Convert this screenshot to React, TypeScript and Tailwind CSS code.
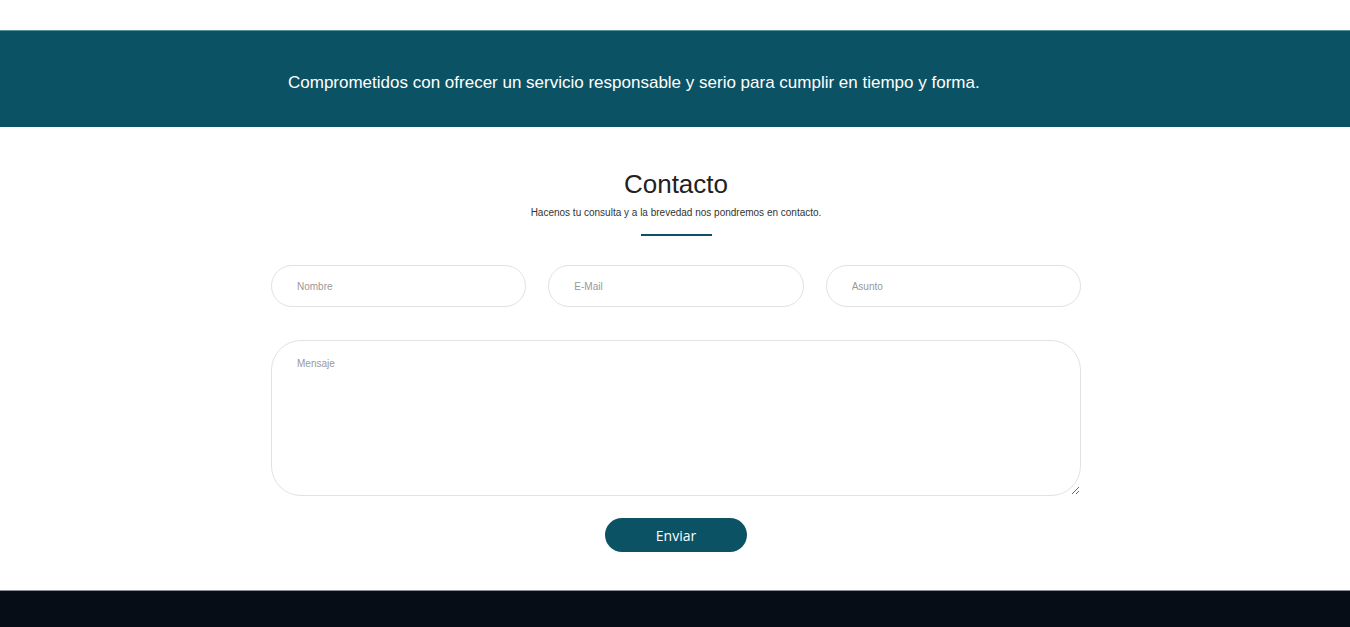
export default function App() {
  return (
    <div className="w-full min-h-[627px] bg-white" style={{ fontFamily: '"Liberation Sans", Arial, sans-serif' }}>
      <div className="h-[30px] bg-white" />
      <div className="h-[97px] bg-[#0b5264] border-t border-[#5a8f9c] flex items-center pl-[288px] pt-[6px]">
        <p className="text-white text-[17px] leading-none">
          Comprometidos con ofrecer un servicio responsable y serio para cumplir en tiempo y forma.
        </p>
      </div>
      <div className="flex flex-col items-center pt-[44px]">
        <h2 className="text-[26px] leading-none text-[#222] font-normal ml-[2px]">Contacto</h2>
        <p className="mt-[11px] text-[10px] leading-none text-[#333] ml-[2px]">
          Hacenos tu consulta y a la brevedad nos pondremos en contacto.
        </p>
        <div className="mt-[16px] w-[71px] h-[2px] bg-[#0b5264] ml-[2px]" />
        <form className="mt-[29px] w-[810px] ml-[2px] flex flex-col" onSubmit={(e) => e.preventDefault()}>
          <div className="grid grid-cols-3 gap-[22px]">
            {["Nombre", "E-Mail", "Asunto"].map((p) => (
              <input
                key={p}
                placeholder={p}
                className="h-[42px] rounded-full border border-[#e2e2e2] px-[25px] text-[10px] text-[#333] placeholder:text-[#999] outline-none"
                style={{ fontFamily: '"Liberation Sans", Arial, sans-serif' }}
              />
            ))}
          </div>
          <textarea
            placeholder="Mensaje"
            className="mt-[33px] h-[156px] rounded-[30px] border border-[#e2e2e2] px-[25px] pt-[15px] text-[10px] text-[#333] placeholder:text-[#999] outline-none"
            style={{ fontFamily: '"Liberation Sans", Arial, sans-serif' }}
          />
          <div className="flex justify-center mt-[22px]">
            <button
              type="submit"
              className="w-[142px] h-[34px] rounded-full bg-[#0b5264] text-white text-[14px] font-medium"
              style={{ fontFamily: '"Open Sans", sans-serif' }}
            >
              Enviar
            </button>
          </div>
        </form>
      </div>
      <div className="mt-[38px] h-[37px] bg-[#060d17] border-t border-[#8a8f96]" />
    </div>
  );
}
